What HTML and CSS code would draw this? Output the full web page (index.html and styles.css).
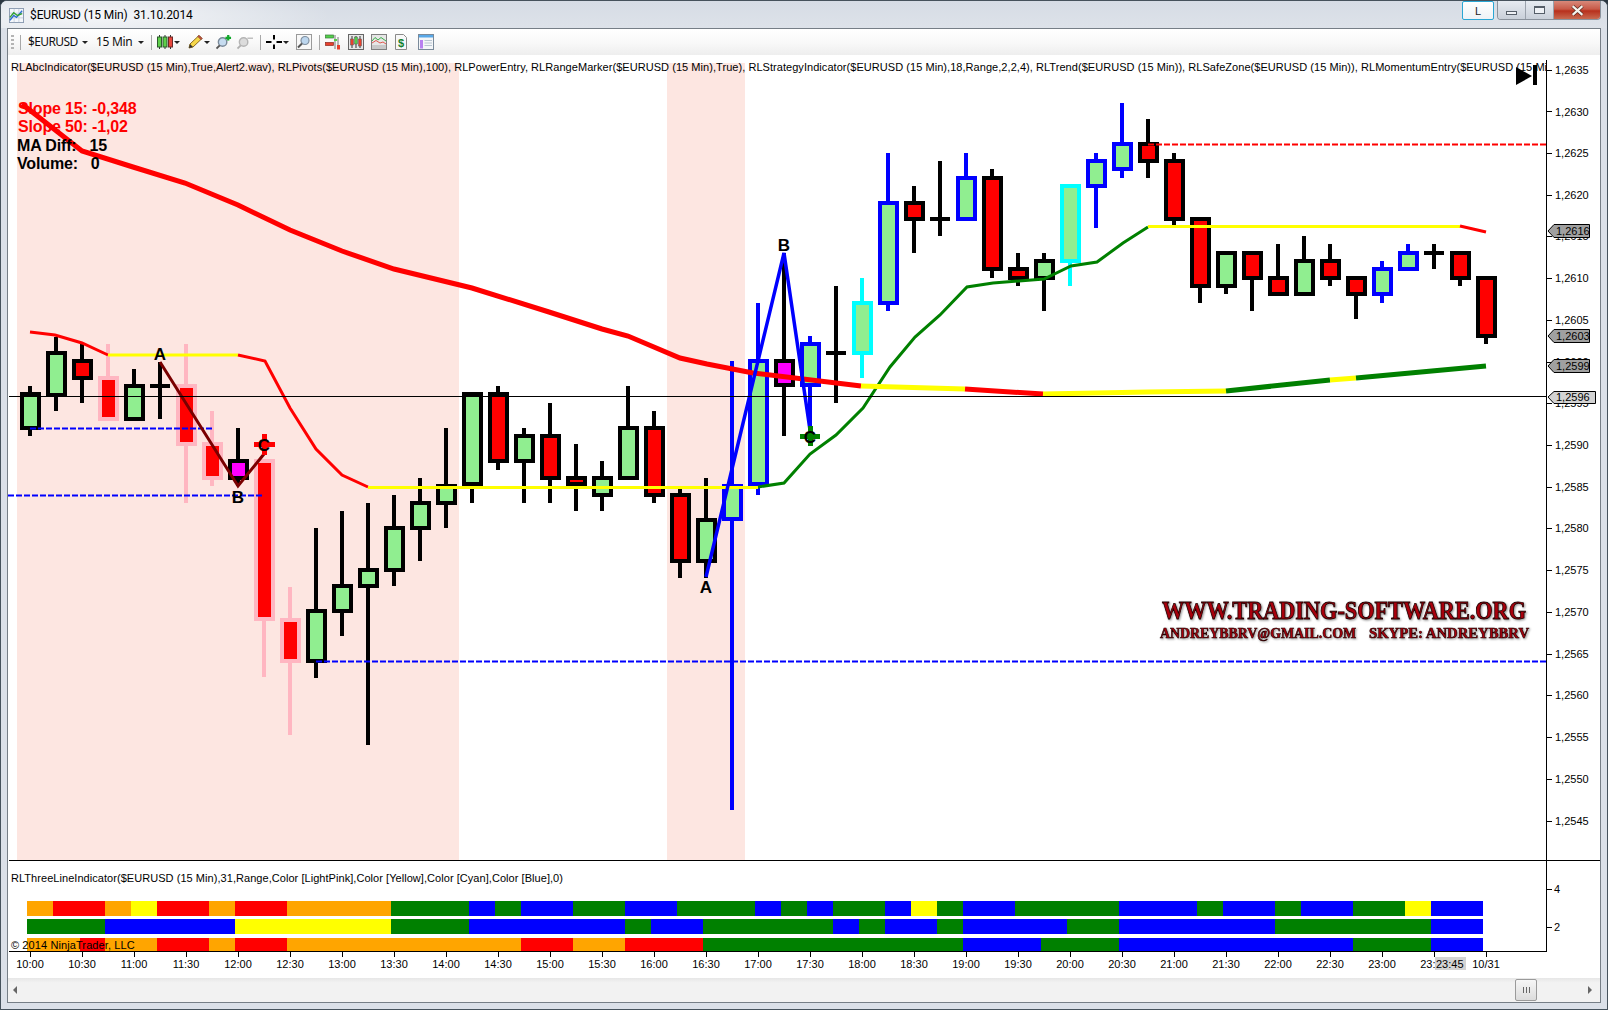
FILE: index.html
```html
<!DOCTYPE html>
<html lang="en">
<head>
<meta charset="utf-8">
<title>$EURUSD (15 Min) 31.10.2014</title>
<link rel="stylesheet" href="styles.css">
</head>
<body>
<div class="window">
  <header class="titlebar">
    <svg class="app-icon" viewBox="0 0 16 16">
      <rect x="0.5" y="0.5" width="15" height="15" fill="#f4f7fb" stroke="#8a9ab0"/>
      <path d="M1 5.5H15M1 10.5H15M5.5 1V15M10.5 1V15" stroke="#c9d3e0" fill="none"/>
      <path d="M1 13L5 8L8 10L14 3" stroke="#2f6fd0" stroke-width="1.5" fill="none"/>
      <path d="M1 10L5 5L9 8L14 6" stroke="#32a032" stroke-width="1.5" fill="none"/>
    </svg>
    <span class="title-text">$EURUSD (15 Min)&nbsp; 31.10.2014</span>
    <button class="cap-l">L</button>
    <div class="cap-group">
      <span class="cap-btn cap-min"><i></i></span>
      <span class="cap-btn cap-max"><i></i></span>
      <span class="cap-close">
        <svg viewBox="0 0 12 10" class="close-x"><path d="M1.5 1L10.5 9M10.5 1L1.5 9" class="close-out"/><path d="M1.5 1L10.5 9M10.5 1L1.5 9" class="close-in"/></svg>
      </span>
    </div>
  </header>

  <main class="client">
    <nav class="toolbar">
      <span class="grip"></span>
      <span class="sep m6"></span>
      <span class="tb-label w1 m7">$EURUSD</span>
      <span class="caret m2"></span>
      <span class="tb-label w2 m8">15 Min</span>
      <span class="caret m2"></span>
      <span class="sep m7"></span>
      <svg class="ico m5" viewBox="0 0 16 16">
        <path d="M2.5 1V15M8 1V15M13.5 1V15" stroke="#333" fill="none"/>
        <rect x="0.5" y="3" width="4" height="10" fill="#5ed04a" stroke="#2d5a2d"/>
        <rect x="6" y="3" width="4" height="10" fill="#5ed04a" stroke="#2d5a2d"/>
        <rect x="11.5" y="3" width="4" height="10" fill="#e8473c" stroke="#6a2a2a"/>
      </svg>
      <span class="caret m1"></span>
      <svg class="ico m7" viewBox="0 0 16 16">
        <path d="M2 14L3 10L12 1.5L15 4.5L6 13Z" fill="#f6d84a" stroke="#8a6a20"/>
        <path d="M11 2.5L12 1.5L15 4.5L14 5.5Z" fill="#e05a4a" stroke="#8a3a30"/>
        <path d="M2 14L3 10L6 13Z" fill="#333"/>
      </svg>
      <span class="caret m1"></span>
      <svg class="ico m6" viewBox="0 0 17 16">
        <circle cx="7" cy="8" r="4.5" fill="#c6dcf0" stroke="#7a8a9a" stroke-width="1.5"/>
        <path d="M4 11.5L0.5 15" stroke="#555" stroke-width="2"/>
        <path d="M13 0.5V6.5M10 3.5H16" stroke="#12a82c" stroke-width="2.4"/>
      </svg>
      <svg class="ico m5" viewBox="0 0 17 16">
        <circle cx="7" cy="8" r="4.5" fill="#dcdcdc" stroke="#b5b5b5" stroke-width="1.5"/>
        <path d="M4 11.5L0.5 15" stroke="#b0b0b0" stroke-width="2"/>
        <path d="M11 4H17" stroke="#c0c0c0" stroke-width="1.5"/>
      </svg>
      <span class="sep m7"></span>
      <svg class="ico m5" viewBox="0 0 16 16">
        <path d="M0 8H5.5M10.5 8H16M8 1V5.5M8 10.5V15" stroke="#000" stroke-width="2"/>
      </svg>
      <span class="caret m1"></span>
      <svg class="ico m7" viewBox="0 0 16 16">
        <rect x="0.5" y="0.5" width="15" height="15" fill="#f8f8f8" stroke="#9a9a9a"/>
        <circle cx="9" cy="6.5" r="4" fill="#bcd6ee" stroke="#8090a0" stroke-width="1.2"/>
        <path d="M6 9.5L2 13.5" stroke="#555" stroke-width="2"/>
      </svg>
      <span class="sep m7"></span>
      <svg class="ico m5" viewBox="0 0 16 16">
        <path d="M10 1V15M13 3V15" stroke="#777" fill="none"/>
        <rect x="0.5" y="1" width="8" height="3" fill="#52d04a" stroke="#3a7a3a" stroke-width="0.7"/>
        <rect x="0.5" y="8.5" width="8" height="3" fill="#e8402c" stroke="#8a2a20" stroke-width="0.7"/>
        <rect x="12" y="11" width="3" height="4.5" fill="#e8402c"/>
        <rect x="9" y="5" width="3" height="2" fill="#52d04a"/>
      </svg>
      <svg class="ico m7" viewBox="0 0 16 16">
        <rect x="0.5" y="0.5" width="15" height="15" fill="#e8e8e8" stroke="#666"/>
        <path d="M4 2V14M8 2V14M12 2V14" stroke="#333"/>
        <rect x="2.5" y="5" width="3" height="6" fill="#e8402c" stroke="#555" stroke-width="0.5"/>
        <rect x="6.5" y="3" width="3" height="7" fill="#52d04a" stroke="#555" stroke-width="0.5"/>
        <rect x="10.5" y="5" width="3" height="7" fill="#e8402c" stroke="#555" stroke-width="0.5"/>
      </svg>
      <svg class="ico m7" viewBox="0 0 16 16">
        <rect x="0.5" y="0.5" width="15" height="15" fill="#e6e6e6" stroke="#808080"/>
        <rect x="1" y="11" width="14" height="4" fill="#c8c8c8"/>
        <path d="M1 7L4 3.5L7 6L10 3.5L15 7" stroke="#3ab04a" fill="none"/>
        <path d="M1 9L5 6.5L9 9L12 8L15 10" stroke="#e05a50" fill="none"/>
      </svg>
      <svg class="doc m8" viewBox="0 0 12 16">
        <path d="M0.5 0.5H8.5L11.5 3.5V15.5H0.5Z" fill="#f8f8f8" stroke="#8a8a8a"/>
        <text x="6" y="13" class="doc-sign">$</text>
      </svg>
      <svg class="ico m11" viewBox="0 0 16 16">
        <rect x="0.5" y="0.5" width="15" height="15" fill="#f4f6f8" stroke="#7a8a9a"/>
        <rect x="1" y="1" width="14" height="2.5" fill="#58a8e8"/>
        <rect x="2" y="6" width="3" height="8.5" fill="#b880f0"/>
        <path d="M6.5 6.5H14M6.5 9H14M6.5 11.5H14" stroke="#b8c4d0"/>
      </svg>
    </nav>

    <section class="chart">
      <svg class="plot" viewBox="8 55 1593 923" width="1593" height="923">
        <rect class="band" x="17" y="63" width="442" height="797"/>
        <rect class="band" x="667" y="63" width="78" height="797"/>

        <g class="wick pink-s">
          <path d="M108 344V421M186 344V503M212 411V486M264 459V677M290 587V735"/>
        </g>
        <g class="wick black-s">
          <path d="M30 386V436M56 337V411M82 344V403M134 369V421M160 362V419M150 386H170M238 428V486M316 528V678M342 511V636M368 503V745M394 495V586M420 478V561M446 428V528M472 486V503M498 386V470M524 428V503M550 403V503M576 444V511M602 461V511M628 386V426M654 411V503M680 489V578M706 478V578M784 253V436M836 286V403M826 353H846M914 186V253M940 161V236M930 219H950M992 169V278M1018 253V286M1044 253V311M1148 119V178M1174 153V225M1200 217V303M1226 251V294M1252 251V311M1278 244V276M1304 236V259M1330 244V286M1356 276V319M1434 244V269M1424 253H1444M1460 251V286M1486 276V344"/>
        </g>
        <g class="wick blue-s">
          <path d="M732 361V810M758 303V495M810 336V430M888 153V311M966 153V176M1096 153V228M1122 103V178M1382 261V303M1408 244V251"/>
        </g>
        <g class="wick cyan-s">
          <path d="M862 278V378M1070 263V286"/>
        </g>

        <g class="body black-b green-f">
          <rect x="22" y="394" width="17" height="34"/><rect x="48" y="353" width="17" height="42"/><rect x="126" y="386" width="17" height="33"/><rect x="308" y="611" width="17" height="50"/><rect x="334" y="586" width="17" height="25"/><rect x="360" y="570" width="17" height="16"/><rect x="386" y="528" width="17" height="42"/><rect x="412" y="503" width="17" height="25"/><rect x="438" y="486" width="17" height="17"/><rect x="464" y="394" width="17" height="90"/><rect x="516" y="436" width="17" height="25"/><rect x="594" y="478" width="17" height="17"/><rect x="620" y="428" width="17" height="50"/><rect x="698" y="520" width="17" height="41"/><rect x="1036" y="261" width="17" height="17"/><rect x="1218" y="253" width="17" height="33"/><rect x="1296" y="261" width="17" height="33"/>
        </g>
        <g class="body black-b red-f">
          <rect x="74" y="361" width="17" height="17"/><rect x="490" y="394" width="17" height="67"/><rect x="542" y="436" width="17" height="42"/><rect x="568" y="478" width="17" height="6"/><rect x="646" y="428" width="17" height="67"/><rect x="672" y="495" width="17" height="66"/><rect x="906" y="203" width="17" height="16"/><rect x="984" y="178" width="17" height="91"/><rect x="1010" y="269" width="17" height="9"/><rect x="1140" y="144" width="17" height="17"/><rect x="1166" y="161" width="17" height="58"/><rect x="1192" y="219" width="17" height="67"/><rect x="1244" y="253" width="17" height="25"/><rect x="1270" y="278" width="17" height="16"/><rect x="1322" y="261" width="17" height="17"/><rect x="1348" y="278" width="17" height="16"/><rect x="1452" y="253" width="17" height="25"/><rect x="1478" y="278" width="17" height="58"/>
        </g>
        <g class="body black-b magenta-f">
          <rect x="230" y="461" width="17" height="17"/><rect x="776" y="361" width="17" height="24"/>
        </g>
        <g class="body pink-b red-f">
          <rect x="100" y="378" width="17" height="41"/><rect x="178" y="386" width="17" height="58"/><rect x="204" y="444" width="17" height="34"/><rect x="256" y="461" width="17" height="158"/><rect x="282" y="620" width="17" height="41"/>
        </g>
        <g class="body blue-b green-f">
          <rect x="724" y="486" width="17" height="33"/><rect x="750" y="361" width="17" height="123"/><rect x="802" y="344" width="17" height="41"/><rect x="880" y="203" width="17" height="100"/><rect x="958" y="178" width="17" height="41"/><rect x="1088" y="161" width="17" height="25"/><rect x="1114" y="144" width="17" height="25"/><rect x="1374" y="269" width="17" height="25"/><rect x="1400" y="253" width="17" height="16"/>
        </g>
        <g class="body cyan-b green-f">
          <rect x="854" y="303" width="17" height="50"/><rect x="1062" y="186" width="17" height="75"/>
        </g>

        <path class="dash blue-l" d="M30 428.5H212M8 495.5H264M316 661.5H1546"/>
        <path class="dash red-l" d="M1148 144.5H1546"/>

        <path class="trend red-l" d="M30 332L55 335L82 343L108 355"/>
        <path class="trend yellow-l" d="M108 355H238"/>
        <path class="trend red-l" d="M238 355L265 361L290 408L316 449L342 475L368 487"/>
        <path class="trend yellow-l" d="M368 487.5H758"/>
        <path class="trend green-l" d="M758 487L784 483L810 454L836 435L863 408L890 367L915 337L940 315L967 287L993 283L1044 279L1071 266L1097 262L1123 243L1148 227"/>
        <path class="trend yellow-l" d="M1148 226.5H1460"/>
        <path class="trend red-l" d="M1460 226L1486 232"/>

        <path class="ma red-l" d="M22 104L82 151L133 167L185 183L238 205L290 230L342 251L394 269L472 288L549 312L602 329L628 336L680 358L707 364L753 373L861 386"/>
        <path class="ma yellow-l" d="M861 386L965 389"/>
        <path class="ma red-l" d="M965 389L1043 394"/>
        <path class="ma yellow-l" d="M1043 394L1148 392L1226 391"/>
        <path class="ma green-l" d="M1226 391L1330 380"/>
        <path class="ma yellow-l" d="M1330 380L1356 378"/>
        <path class="ma green-l" d="M1356 378L1486 366"/>

        <path class="abc-dark" d="M160 362L238 486L264 454"/>
        <path class="abc-blue" d="M706 577L784 253L810 430"/>
        <path class="plus red-l" d="M254 444H275M264 434V455"/>
        <path class="plus green-l" d="M800 436H820M810 426V446"/>
        <text class="abc" x="160" y="360">A</text>
        <text class="abc" x="238" y="503">B</text>
        <text class="abc" x="264" y="451">C</text>
        <text class="abc" x="706" y="593">A</text>
        <text class="abc" x="784" y="251">B</text>
        <text class="abc" x="810" y="443">C</text>

        <path class="thin" d="M9 396.5H1547"/>

        <text class="wm-big" x="1162" y="619" textLength="364" lengthAdjust="spacingAndGlyphs">WWW.TRADING-SOFTWARE.ORG</text>
        <text class="wm-small" x="1160" y="638" textLength="196" lengthAdjust="spacingAndGlyphs">ANDREYBBRV@GMAIL.COM</text>
        <text class="wm-small" x="1369" y="638" textLength="160" lengthAdjust="spacingAndGlyphs">SKYPE: ANDREYBBRV</text>

        <polygon class="play" points="1516,67 1532,76 1516,85"/>
        <rect class="play" x="1533" y="65" width="4" height="20"/>

        <g class="seg">
          <rect class="o" x="27" y="901" width="26" height="15"/><rect class="r" x="53" y="901" width="52" height="15"/><rect class="o" x="105" y="901" width="26" height="15"/><rect class="y" x="131" y="901" width="26" height="15"/><rect class="r" x="157" y="901" width="52" height="15"/><rect class="o" x="209" y="901" width="26" height="15"/><rect class="r" x="235" y="901" width="52" height="15"/><rect class="o" x="287" y="901" width="104" height="15"/><rect class="g" x="391" y="901" width="78" height="15"/><rect class="b" x="469" y="901" width="26" height="15"/><rect class="g" x="495" y="901" width="26" height="15"/><rect class="b" x="521" y="901" width="52" height="15"/><rect class="g" x="573" y="901" width="52" height="15"/><rect class="b" x="625" y="901" width="52" height="15"/><rect class="g" x="677" y="901" width="78" height="15"/><rect class="b" x="755" y="901" width="26" height="15"/><rect class="g" x="781" y="901" width="26" height="15"/><rect class="b" x="807" y="901" width="26" height="15"/><rect class="g" x="833" y="901" width="52" height="15"/><rect class="b" x="885" y="901" width="26" height="15"/><rect class="y" x="911" y="901" width="26" height="15"/><rect class="g" x="937" y="901" width="26" height="15"/><rect class="b" x="963" y="901" width="52" height="15"/><rect class="g" x="1015" y="901" width="104" height="15"/><rect class="b" x="1119" y="901" width="78" height="15"/><rect class="g" x="1197" y="901" width="26" height="15"/><rect class="b" x="1223" y="901" width="52" height="15"/><rect class="g" x="1275" y="901" width="26" height="15"/><rect class="b" x="1301" y="901" width="52" height="15"/><rect class="g" x="1353" y="901" width="52" height="15"/><rect class="y" x="1405" y="901" width="26" height="15"/><rect class="b" x="1431" y="901" width="52" height="15"/>

          <rect class="g" x="27" y="919" width="78" height="15"/><rect class="b" x="105" y="919" width="130" height="15"/><rect class="y" x="235" y="919" width="156" height="15"/><rect class="g" x="391" y="919" width="78" height="15"/><rect class="b" x="469" y="919" width="156" height="15"/><rect class="g" x="625" y="919" width="26" height="15"/><rect class="b" x="651" y="919" width="52" height="15"/><rect class="g" x="703" y="919" width="130" height="15"/><rect class="b" x="833" y="919" width="26" height="15"/><rect class="g" x="859" y="919" width="26" height="15"/><rect class="b" x="885" y="919" width="52" height="15"/><rect class="g" x="937" y="919" width="26" height="15"/><rect class="b" x="963" y="919" width="104" height="15"/><rect class="g" x="1067" y="919" width="52" height="15"/><rect class="b" x="1119" y="919" width="156" height="15"/><rect class="g" x="1275" y="919" width="156" height="15"/><rect class="b" x="1431" y="919" width="52" height="15"/>

          <rect class="o" x="27" y="938" width="53" height="13"/><rect class="r" x="80" y="938" width="25" height="13"/><rect class="o" x="105" y="938" width="52" height="13"/><rect class="r" x="157" y="938" width="52" height="13"/><rect class="o" x="209" y="938" width="26" height="13"/><rect class="r" x="235" y="938" width="52" height="13"/><rect class="o" x="287" y="938" width="234" height="13"/><rect class="r" x="521" y="938" width="52" height="13"/><rect class="o" x="573" y="938" width="52" height="13"/><rect class="r" x="625" y="938" width="78" height="13"/><rect class="g" x="703" y="938" width="260" height="13"/><rect class="b" x="963" y="938" width="78" height="13"/><rect class="g" x="1041" y="938" width="78" height="13"/><rect class="b" x="1119" y="938" width="234" height="13"/><rect class="g" x="1353" y="938" width="78" height="13"/><rect class="b" x="1431" y="938" width="52" height="13"/>
        </g>

        <path class="thin" d="M9 860.5H1600M1546.5 60V951.5M9 951.5H1547"/>
        <path class="thin" d="M1547 70.5H1552M1547 111.5H1552M1547 153.5H1552M1547 195.5H1552M1547 236.5H1552M1547 278.5H1552M1547 320.5H1552M1547 362.5H1552M1547 403.5H1552M1547 445.5H1552M1547 487.5H1552M1547 528.5H1552M1547 570.5H1552M1547 612.5H1552M1547 654.5H1552M1547 695.5H1552M1547 737.5H1552M1547 779.5H1552M1547 821.5H1552M1547 889.5H1552M1547 927.5H1552"/>
        <path class="thin" d="M30.5 951V957M82.5 951V957M134.5 951V957M186.5 951V957M238.5 951V957M290.5 951V957M342.5 951V957M394.5 951V957M446.5 951V957M498.5 951V957M550.5 951V957M602.5 951V957M654.5 951V957M706.5 951V957M758.5 951V957M810.5 951V957M862.5 951V957M914.5 951V957M966.5 951V957M1018.5 951V957M1070.5 951V957M1122.5 951V957M1174.5 951V957M1226.5 951V957M1278.5 951V957M1330.5 951V957M1382.5 951V957M1434.5 951V957M1486.5 951V957"/>

        <g class="axis">
          <text x="1555" y="74">1,2635</text><text x="1555" y="116">1,2630</text><text x="1555" y="157">1,2625</text><text x="1555" y="199">1,2620</text><text x="1555" y="240">1,2615</text><text x="1555" y="282">1,2610</text><text x="1555" y="324">1,2605</text><text x="1555" y="366">1,2600</text><text x="1555" y="407">1,2595</text><text x="1555" y="449">1,2590</text><text x="1555" y="491">1,2585</text><text x="1555" y="532">1,2580</text><text x="1555" y="574">1,2575</text><text x="1555" y="616">1,2570</text><text x="1555" y="658">1,2565</text><text x="1555" y="699">1,2560</text><text x="1555" y="741">1,2555</text><text x="1555" y="783">1,2550</text><text x="1555" y="825">1,2545</text>
          <text x="1554" y="893">4</text><text x="1554" y="931">2</text>
        </g>

        <polygon class="flag" points="1548,231 1554,224.5 1589.5,224.5 1589.5,237.5 1554,237.5"/>
        <polygon class="flag" points="1548,336 1554,329.5 1589.5,329.5 1589.5,342.5 1554,342.5"/>
        <polygon class="flag" points="1548,366 1554,359.5 1589.5,359.5 1589.5,372.5 1554,372.5"/>
        <polygon class="flag flag-light" points="1548,397 1554,391.5 1595.5,391.5 1595.5,403.5 1554,403.5"/>
        <g class="axis">
          <text x="1556" y="235">1,2616</text><text x="1556" y="340">1,2603</text><text x="1556" y="370">1,2599</text><text x="1556" y="401">1,2596</text>
        </g>

        <g class="axis center">
          <text x="30" y="968">10:00</text><text x="82" y="968">10:30</text><text x="134" y="968">11:00</text><text x="186" y="968">11:30</text><text x="238" y="968">12:00</text><text x="290" y="968">12:30</text><text x="342" y="968">13:00</text><text x="394" y="968">13:30</text><text x="446" y="968">14:00</text><text x="498" y="968">14:30</text><text x="550" y="968">15:00</text><text x="602" y="968">15:30</text><text x="654" y="968">16:00</text><text x="706" y="968">16:30</text><text x="758" y="968">17:00</text><text x="810" y="968">17:30</text><text x="862" y="968">18:00</text><text x="914" y="968">18:30</text><text x="966" y="968">19:00</text><text x="1018" y="968">19:30</text><text x="1070" y="968">20:00</text><text x="1122" y="968">20:30</text><text x="1174" y="968">21:00</text><text x="1226" y="968">21:30</text><text x="1278" y="968">22:00</text><text x="1330" y="968">22:30</text><text x="1382" y="968">23:00</text><text x="1434" y="968">23:30</text><text x="1486" y="968">10/31</text>
        </g>
        <rect class="time-flag" x="1435" y="957" width="31" height="13"/>
        <text class="axis-text" x="1436" y="968">23:45</text>
      </svg>

      <p class="legend legend-top">RLAbcIndicator($EURUSD (15 Min),True,Alert2.wav), RLPivots($EURUSD (15 Min),100), RLPowerEntry, RLRangeMarker($EURUSD (15 Min),True), RLStrategyIndicator($EURUSD (15 Min),18,Range,2,2,4), RLTrend($EURUSD (15 Min)), RLSafeZone($EURUSD (15 Min)), RLMomentumEntry($EURUSD (15 Min))</p>
      <p class="legend legend-low">RLThreeLineIndicator($EURUSD (15 Min),31,Range,Color [LightPink],Color [Yellow],Color [Cyan],Color [Blue],0)</p>
      <p class="copyright">© 2014 NinjaTrader, LLC</p>
      <div class="stats">
        <div class="stat-red">Slope 15: -0,348</div>
        <div class="stat-red">Slope 50: -1,02</div>
        <div class="stat-ma">MA Diff:   15</div>
        <div class="stat-ma">Volume:   0</div>
      </div>
    </section>

    <div class="scrollbar">
      <span class="arrow-l"></span>
      <span class="thumb"><i></i><i></i><i></i></span>
      <span class="arrow-r"></span>
    </div>
  </main>
</div>
</body>
</html>
```
FILE: styles.css
```css
* { box-sizing: border-box; }
html, body { margin: 0; padding: 0; background: #2a3640; }
body { width: 1608px; height: 1010px; overflow: hidden; font-family: "Liberation Sans", Arial, sans-serif; }

.window {
  width: 1608px; height: 1010px;
  border: 1px solid #46525c;
  border-radius: 7px 7px 0 0;
  background: #dbe0e8;
  display: flex; flex-direction: column;
  overflow: hidden;
}

/* title bar */
.titlebar {
  height: 27px; flex: none;
  display: flex; align-items: flex-start;
  background:
    radial-gradient(ellipse 240px 30px at 90px 14px, rgba(255,255,255,.75), rgba(255,255,255,0)),
    linear-gradient(#d6dce5, #dde2e9);
}
.app-icon { width: 15px; height: 15px; margin: 7px 0 0 8px; flex: none; }
.title-text { margin: 6px 0 0 6px; font: 12px/16px Roboto, sans-serif; letter-spacing: -.1px; color: #000; white-space: nowrap; }
.cap-l {
  margin: 0 3px 0 auto;
  width: 32px; height: 19px; padding: 0;
  border: 1px solid #2aa6d4; border-radius: 2px;
  background: linear-gradient(#fff, #eef2f6);
  font: 11px "Liberation Sans", sans-serif; color: #222;
}
.cap-group {
  display: flex; height: 19px; margin-right: 6px;
  border: 1px solid #8a929c; border-top: 0; border-radius: 0 0 4px 4px;
  overflow: hidden;
}
.cap-btn {
  display: flex; align-items: center; justify-content: center;
  width: 28px; height: 18px;
  background: linear-gradient(#e6ebf1, #c9d0d9);
  border-right: 1px solid #9aa2ac;
}
.cap-min i { display: block; width: 11px; height: 4px; margin-top: 6px; border: 1px solid #555e68; background: #eef1f5; }
.cap-max i { display: block; width: 11px; height: 8px; border: 1px solid #555e68; border-top-width: 2px; background: #eef1f5; }
.cap-close {
  display: flex; align-items: center; justify-content: center;
  width: 46px; height: 18px;
  background: linear-gradient(#d8897a 0%, #c85a48 45%, #b8301c 55%, #c86a50 100%);
}
.close-x { width: 13px; height: 11px; }
.close-out { stroke: #5a2a20; stroke-width: 3.4; fill: none; }
.close-in { stroke: #f4f4ee; stroke-width: 2; fill: none; }

/* client */
.client {
  flex: none;
  width: 1594px; height: 975px;
  margin-left: 6px;
  border: 1px solid #767e86;
  background: #fff;
  display: flex; flex-direction: column;
}

/* toolbar */
.toolbar {
  height: 26px; flex: none;
  display: flex; align-items: center;
  padding-left: 3px;
  background: linear-gradient(#fff 0%, #f9f9f9 50%, #eeeeee 100%);
  border-radius: 3px 3px 0 0;
}
.grip {
  width: 3px; height: 14px; flex: none;
  background: repeating-linear-gradient(#b4b4b4 0 2px, transparent 2px 4px);
}
.sep { width: 1px; height: 15px; background: #a8a8a8; flex: none; }
.tb-label { font: 12px/16px "Noto Sans", sans-serif; color: #111; white-space: nowrap; flex: none; }
.w1 { width: 49px; letter-spacing: -.6px; }
.w2 { width: 37px; letter-spacing: -.3px; }
.caret { width: 0; height: 0; flex: none; margin-right: 0; border-left: 3.5px solid transparent; border-right: 3.5px solid transparent; border-top: 3.5px solid #222; }
.ico { width: 16px; height: 16px; flex: none; }
.doc { width: 12px; height: 16px; flex: none; }
.doc-sign { font: bold 11px "Liberation Sans", sans-serif; fill: #12802c; text-anchor: middle; }
.m1 { margin-left: 1px; } .m2 { margin-left: 5px; } .m5 { margin-left: 5px; } .m6 { margin-left: 6px; }
.m7 { margin-left: 7px; } .m8 { margin-left: 8px; } .m11 { margin-left: 11px; }

/* chart */
.chart { position: relative; height: 923px; flex: none; overflow: hidden; }
.plot { display: block; }
.band { fill: #fde6e1; }
.wick path { fill: none; stroke-width: 4; shape-rendering: crispEdges; }
.black-s path { stroke: #000; } .blue-s path { stroke: #00f; } .cyan-s path { stroke: #0ff; } .pink-s path { stroke: #ffb6c1; }
.body rect { stroke-width: 4; shape-rendering: crispEdges; }
.black-b rect { stroke: #000; } .blue-b rect { stroke: #00f; } .cyan-b rect { stroke: #0ff; } .pink-b rect { stroke: #ffb6c1; }
.green-f rect { fill: #90ee90; } .red-f rect { fill: #f00; } .magenta-f rect { fill: #f0f; }

.red-l { stroke: #f00; } .yellow-l { stroke: #ff0; } .green-l { stroke: #008000; } .blue-l { stroke: #00f; }
.dash { fill: none; stroke-width: 2; stroke-dasharray: 6 2; }
.trend { fill: none; stroke-width: 3; }
.ma { fill: none; stroke-width: 5; }
.abc-dark { fill: none; stroke: #7a0000; stroke-width: 3; }
.abc-blue { fill: none; stroke: #00f; stroke-width: 3.5; }
.plus { fill: none; stroke-width: 5; shape-rendering: crispEdges; }
.abc { font: bold 17px "Liberation Sans", sans-serif; fill: #000; text-anchor: middle; }
.thin { fill: none; stroke: #000; stroke-width: 1; shape-rendering: crispEdges; }
.play { fill: #000; }

.wm-big, .wm-small {
  font-family: "Liberation Serif", serif; font-weight: bold;
  fill: #a8000c; stroke: #200; filter: drop-shadow(1px 1px 1px rgba(0,0,0,.45));
}
.wm-big { font-size: 26px; stroke-width: .9px; }
.wm-small { font-size: 14px; stroke-width: .6px; }

.seg .o { fill: #ffa500; } .seg .r { fill: #f00; } .seg .y { fill: #ff0; } .seg .g { fill: #008000; } .seg .b { fill: #00f; }

.axis text, .axis-text { font: 11px "Liberation Sans", sans-serif; fill: #000; }
.center text { text-anchor: middle; }
.flag { fill: #a0a0a0; stroke: #000; stroke-width: 1; }
.flag-light { fill: #d3d3d3; }
.time-flag { fill: #d3d3d3; }

.legend, .copyright { position: absolute; margin: 0; font: 11px/14px "Liberation Sans", sans-serif; color: #000; white-space: nowrap; letter-spacing: .05px; }
.legend-top { left: 3px; top: 5px; width: 1535px; overflow: hidden; }
.legend-low { left: 3px; top: 816px; }
.copyright { left: 3px; top: 883px; letter-spacing: .1px; }
.stats { position: absolute; left: 9px; top: 45px; font: bold 16px/18.3px "Liberation Sans", sans-serif; letter-spacing: -.15px; }
.stat-red { color: #f00; padding-left: 1px; white-space: pre; }
.stat-ma { color: #000; white-space: pre; }

/* scrollbar */
.scrollbar {
  flex: 1; min-height: 0;
  display: flex; align-items: center;
  padding: 0 8px 0 5px;
  background: linear-gradient(#e6e6e6, #f2f2f2 20%, #f2f2f2);
}
.arrow-l { width: 0; height: 0; border-top: 4px solid transparent; border-bottom: 4px solid transparent; border-right: 4px solid #666; }
.arrow-r { width: 0; height: 0; margin-left: 51px; border-top: 4px solid transparent; border-bottom: 4px solid transparent; border-left: 4px solid #666; }
.thumb {
  margin-left: auto; width: 22px; height: 22px;
  display: flex; align-items: center; justify-content: center; gap: 2px;
  border: 1px solid #9a9a9a; border-radius: 2px;
  background: linear-gradient(#f6f6f6, #dcdcdc);
}
.thumb i { width: 1px; height: 6px; background: #666; display: block; }
```
